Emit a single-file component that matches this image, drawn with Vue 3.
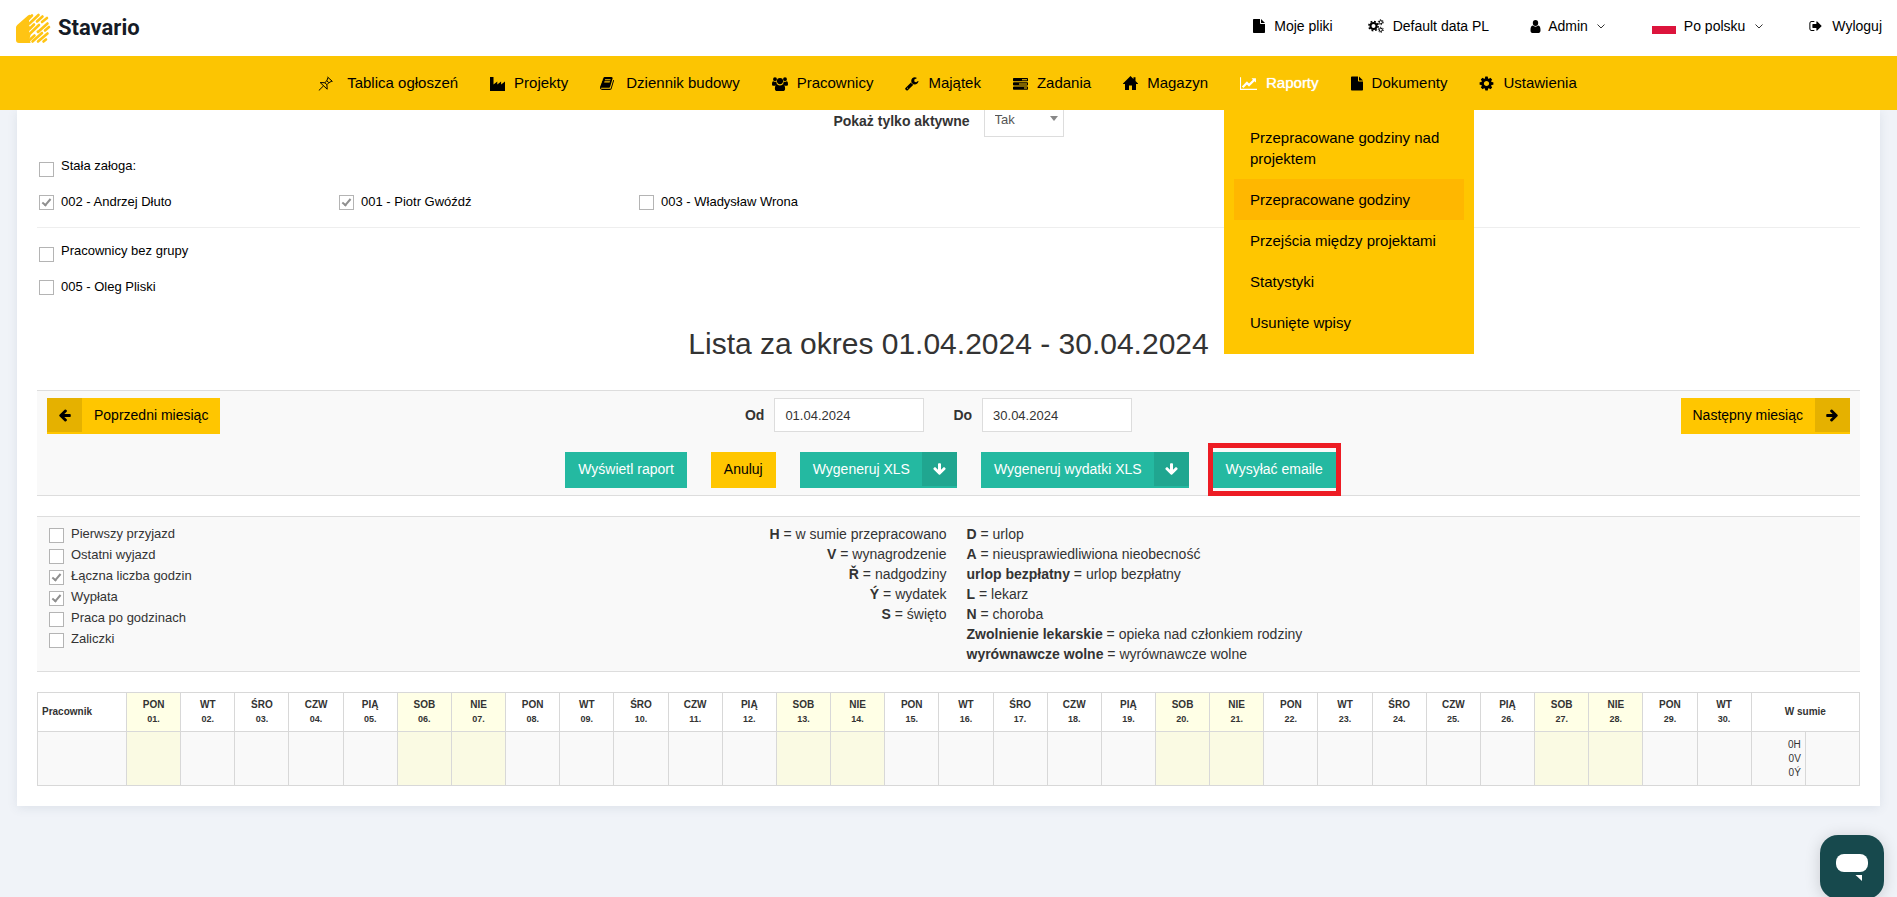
<script setup>
import { ref } from 'vue'

const icons = {
  pin: { w: 15, box: '0 0 15 15', stroke: true, d: 'M9.500 1l5 4.500M10 1.500L8.800 4.800 6.800 6.700 2.200 6.600l7 6.600-.3-4.500 2-2L14 5M5.500 9.900L.8 14.500M6.800 6.700L8.900 8.700M8.800 4.800L10.900 6.700' },
  industry: { w: 15, box: '0 0 15 15', d: 'M0 1h3.500v7.500l3.800-3v3l3.800-3v3L15 5.500V15H0z' },
  book: { w: 14, box: '0 0 1664 1792', d: 'M1639 478q40 57 18 129l-275 906q-19 64-76.500 107.500T1183 1664H260q-77 0-148.500-53.500T12 1479q-24-67-2-127 0-4 3-27t4-37q1-8-3-21.500t-3-19.500q2-11 8-21t16.500-23.500T52 1179q23-38 45-91.500t30-91.500q3-10 .5-30t-.5-28q3-11 17-28t17-23q21-36 42-92t25-90q1-9-2.500-32t.5-28q4-13 22-30.500t22-22.500q19-26 42.500-84.500T340 411q1-8-3-25.500t-2-26.500q2-8 9-18t18-23 17-21q8-12 16.500-30.500T410 231t16-36 19.500-32 26.500-23.500 36-11.500 47.500 5.500l-1 3q38-9 51-9h761q74 0 114 56t18 130l-274 906q-36 119-71.500 153.500T1025 1408H156q-27 0-38 15-11 16-1 43 24 70 144 70h923q29 0 56-15.500t35-41.500l300-987q7-22 5-57 38 15 59 43zM575 480q-4 13 2 22.500t20 9.500h608q13 0 25.500-9.500T1247 480l21-64q4-13-2-22.500t-20-9.500H638q-13 0-25.500 9.500T596 416zm-83 256q-4 13 2 22.500t20 9.500h608q13 0 25.500-9.500T1164 736l21-64q4-13-2-22.500t-20-9.500H555q-13 0-25.500 9.500T513 672z' },
  users: { w: 16, box: '0 0 16 15', d: 'M3 1.200a1.900 1.900 0 1 1 0 3.900 1.900 1.900 0 0 1 0-3.900zm10 0a1.900 1.900 0 1 1 0 3.900 1.900 1.900 0 0 1 0-3.900zM8 2a3 3 0 1 1 0 6.200A3 3 0 0 1 8 2zM0 8.200C0 6.500.4 5.200 1.400 5.200c1 .8 2 .8 3 .4 0 1.400.3 2.400 1 3.200-1 0-1.900.4-2.500 1H1.500C.6 9.800 0 9.300 0 8.200zm16 0c0-1.700-.4-3-1.400-3-1 .8-2 .8-3 .4 0 1.400-.3 2.400-1 3.200 1 0 1.900.4 2.500 1h1.400c.9 0 1.500-.5 1.500-1.600zM5.300 8.500c1.700 1.200 3.700 1.200 5.400 0 1.800 0 2.400 1.900 2.400 4.200 0 1.500-.9 2.300-2.200 2.300H5.100c-1.300 0-2.200-.8-2.200-2.300 0-2.300.6-4.200 2.400-4.200z' },
  wrench: { w: 14, box: '64 0 1728 1792', d: 'M448 1472q0-26-19-45t-45-19-45 19-19 45 19 45 45 19 45-19 19-45zm644-420l-682 682q-37 37-90 37-52 0-91-37l-106-108q-38-36-38-90 0-53 38-91l681-681q39 98 114.500 173.500t173.500 114.500zm634-435q0 39-23 106-47 134-164.500 217.500t-258.500 83.500q-185 0-316.500-131.500t-131.500-316.500 131.500-316.500 316.500-131.500q58 0 121.500 16.500t107.500 46.500q16 11 16 28t-16 28l-293 169v224l193 107q5-3 79-48.500t135.500-81 70.500-35.500q15 0 23.500 10t8.500 25z' },
  tasks: { w: 15, box: '0 0 15 15', d: 'M.8 2h13.400c.5 0 .8.300.8.800v1.700c0 .5-.3.800-.8.800H.8c-.5 0-.8-.3-.8-.8V2.800C0 2.300.3 2 .8 2zM9 3.200v1h5v-1zM.8 6.200h13.400c.5 0 .8.300.8.800v1.700c0 .5-.3.800-.8.800H.8c-.5 0-.8-.3-.8-.8V7c0-.5.3-.8.8-.8zM6 7.400v1h8v-1zM.8 10.400h13.400c.5 0 .8.300.8.800v1.700c0 .5-.3.800-.8.800H.8c-.5 0-.8-.3-.8-.8v-1.700c0-.5.3-.8.8-.8zM11 11.600v1h3v-1z' },
  home: { w: 15, box: '0 0 15 15', d: 'M7.500 0L10.500 3V1.200h2V5L15 7.500V8h-2v6H9V9.500H6V14H2V8H0v-.5z' },
  chart: { w: 17, box: '0 0 2048 1792', d: 'M2048 1536v128h-2048v-1536h128v1408h1920zm-128-1248v435q0 21-19.500 29.500t-35.500-7.500l-121-121-633 633q-10 10-23 10t-23-10l-233-233-416 416-192-192 585-585q10-10 23-10t23 10l233 233 464-464-121-121q-16-16-7.500-35.500t29.500-19.500h435q14 0 23 9t9 23z' },
  file: { w: 12, box: '0 0 12 14', d: 'M.8 0H7v4.200c0 .5.300.8.800.8H12v8.200c0 .5-.3.800-.8.800H.8c-.5 0-.8-.3-.8-.8V.8C0 .3.300 0 .8 0zM8 0l4 4H8z' },
  cog: { w: 15, box: '60 60 1672 1672', d: 'M1186 896q0-120-85-205t-205-85-205 85-85 205 85 205 205 85 205-85 85-205zm478-109v222q0 12-8 23t-20 13l-185 28q-19 54-39 91 35 50 107 138 10 12 10 25t-9 23q-27 37-99 108t-94 71q-12 0-26-9l-138-108q-44 23-91 38-16 136-29 186-7 28-36 28h-222q-14 0-24.500-8.500t-11.500-21.500l-28-184q-49-16-90-37l-141 107q-10 9-25 9-14 0-25-11-126-114-165-168-7-10-7-23 0-12 8-23 15-21 51-66.500t54-70.500q-27-50-41-99l-183-27q-13-2-21-12.500t-8-23.500v-222q0-12 8-23t19-13l186-28q14-46 39-92-40-57-107-138-10-12-10-24 0-10 9-23 26-36 98.500-107.500t94.500-71.500q13 0 26 10l138 107q44-23 91-38 16-136 29-186 7-28 36-28h222q14 0 24.500 8.500t11.500 21.500l28 184q49 16 90 37l142-107q9-9 24-9 13 0 25 10 129 119 165 170 7 8 7 22 0 12-8 23-15 21-51 66.500t-54 70.500q26 50 41 98l183 28q13 2 21 12.500t8 23.500z' },
}

const nav = [
  { icon: 'pin', label: 'Tablica ogłoszeń', gap: 'gap-l' },
  { icon: 'industry', label: 'Projekty' },
  { icon: 'book', label: 'Dziennik budowy', gap: 'gap-m' },
  { icon: 'users', label: 'Pracownicy' },
  { icon: 'wrench', label: 'Majątek' },
  { icon: 'tasks', label: 'Zadania' },
  { icon: 'home', label: 'Magazyn' },
  {
    icon: 'chart', label: 'Raporty', active: true,
    menu: ['Przepracowane godziny nad projektem', 'Przepracowane godziny', 'Przejścia między projektami', 'Statystyki', 'Usunięte wpisy'],
  },
  { icon: 'file', label: 'Dokumenty' },
  { icon: 'cog', label: 'Ustawienia' },
]

const arrow = 'M1664 896v128q0 53-32.500 90.500t-84.500 37.500h-704l293 294q38 36 38 90t-38 90l-75 76q-37 37-90 37-52 0-91-37l-651-652q-37-37-37-90 0-52 37-91l651-650q38-38 91-38 52 0 90 38l75 74q38 38 38 91t-38 91l-293 293h704q52 0 84.500 37.500t32.500 90.500z'

const onlyActive = ref('Tak')
const from = ref('01.04.2024')
const to = ref('30.04.2024')

const groups = ref([
  {
    label: 'Stała załoga:', on: false,
    people: [
      { label: '002 - Andrzej Dłuto', on: true },
      { label: '001 - Piotr Gwóźdź', on: true },
      { label: '003 - Władysław Wrona', on: false },
    ],
  },
  { label: 'Pracownicy bez grupy', on: false, people: [{ label: '005 - Oleg Pliski', on: false }] },
])

const options = ref([
  { label: 'Pierwszy przyjazd', on: false },
  { label: 'Ostatni wyjazd', on: false },
  { label: 'Łączna liczba godzin', on: true },
  { label: 'Wypłata', on: true },
  { label: 'Praca po godzinach', on: false },
  { label: 'Zaliczki', on: false },
])

const legendTotals = [['H', 'w sumie przepracowano'], ['V', 'wynagrodzenie'], ['Ř', 'nadgodziny'], ['Ý', 'wydatek'], ['S', 'święto']]
const legendAbsence = [
  ['D', 'urlop'],
  ['A', 'nieusprawiedliwiona nieobecność'],
  ['urlop bezpłatny', 'urlop bezpłatny'],
  ['L', 'lekarz'],
  ['N', 'choroba'],
  ['Zwolnienie lekarskie', 'opieka nad członkiem rodziny'],
  ['wyrównawcze wolne', 'wyrównawcze wolne'],
]

const names = ['PON', 'WT', 'ŚRO', 'CZW', 'PIĄ', 'SOB', 'NIE']
const marked = [1, 6, 7, 13, 14, 20, 21, 27, 28]
const days = Array.from({ length: 30 }, (_, i) => ({
  name: names[i % 7],
  date: String(i + 1).padStart(2, '0') + '.',
  marked: marked.includes(i + 1),
}))
</script>

<template>
  <div class="page">
    <header class="top">
      <a href="#" class="logo" aria-label="Stavario">
        <svg width="36" height="32" viewBox="0 0 36 32" aria-hidden="true">
          <path d="M1 15.500Q1 14 2.200 13L13 3.500Q15 2 16 3.500L14 8.500V13l1.500 3-1.500 4 1.500 3-1 4 1 3.500V31H4Q1 31 1 28z" fill="#ffc414" />
          <g stroke="#ffc414" stroke-width="2.600" stroke-linecap="round" fill="none">
            <path d="M12 8.500L17 3.500M14.500 11.500L23.500 3M14.500 17L19 12.500M22 9.500L27.500 4.500M13.500 23L24 13M27 10L32 6M14 28.500L19.500 23.500M23 20L32.500 11.500M17.500 29.500L27 21M30 18.500L34 15M23 29.500L32.500 21.500M28.500 29.500L31 27.500" />
          </g>
          <circle cx="22.500" cy="19.500" r="1" fill="#ffc414" />
        </svg>
        <span>Stavario</span>
      </a>
      <nav class="tools" aria-label="Konto">
        <a href="#" class="t-files">
          <svg width="12" height="14" viewBox="0 0 12 14"><path :d="icons.file.d" /></svg>Moje pliki
        </a>
        <a href="#" class="t-data">
          <svg width="16" height="14" viewBox="0 0 16 14">
            <circle cx="5.500" cy="7" r="3" fill="none" stroke="#000" stroke-width="2" />
            <circle cx="5.500" cy="7" r="4.600" fill="none" stroke="#000" stroke-width="1.600" stroke-dasharray="1.800 1.810" />
            <circle cx="12.800" cy="3.200" r="1.600" fill="none" stroke="#000" />
            <circle cx="12.800" cy="3.200" r="2.500" fill="none" stroke="#000" stroke-dasharray="1.300 1.320" />
            <circle cx="12.800" cy="10.800" r="1.600" fill="none" stroke="#000" />
            <circle cx="12.800" cy="10.800" r="2.500" fill="none" stroke="#000" stroke-dasharray="1.300 1.320" />
          </svg>Default data PL
        </a>
        <a href="#" class="t-user">
          <svg width="11" height="13" viewBox="0 0 11 13"><path d="M5.500 0a2.700 3 0 1 1 0 6 2.700 3 0 0 1 0-6zM2.800 5.600c1.700 1.500 3.700 1.500 5.400 0C10 5.800 10.500 8 10.500 10.300c0 1.700-.8 2.700-1.800 2.700H2.300c-1 0-1.800-1-1.800-2.700C.5 8 1 5.800 2.800 5.600z" /></svg>Admin
          <svg class="chev" width="8" height="5" viewBox="0 0 8 5"><path d="M.5.5L4 4 7.500.5" /></svg>
        </a>
        <a href="#" class="t-lang">
          <span class="flag"></span>Po polsku
          <svg class="chev" width="8" height="5" viewBox="0 0 8 5"><path d="M.5.5L4 4 7.500.5" /></svg>
        </a>
        <a href="#" class="t-out">
          <svg width="13" height="12" viewBox="64 128 1568 1536"><path d="M704 1440q0 4 1 20t.5 26.500-3 23.500-10 19.500-20.500 6.500h-320q-119 0-203.500-84.500t-84.500-203.500v-704q0-119 84.500-203.500t203.500-84.500h320q13 0 22.500 9.500t9.500 22.500q0 4 1 20t.5 26.500-3 23.500-10 19.500-20.500 6.500h-320q-66 0-113 47t-47 113v704q0 66 47 113t113 47h312l11.500 1 11.500 3 8 5.500 7 9 2 13.500zm928-544q0 26-19 45l-544 544q-19 19-45 19t-45-19-19-45v-288h-448q-26 0-45-19t-19-45v-384q0-26 19-45t45-19h448v-288q0-26 19-45t45-19 45 19l544 544q19 19 19 45z" /></svg>Wyloguj
        </a>
      </nav>
    </header>

    <nav class="bar" aria-label="Menu">
      <div v-for="n in nav" :key="n.label" class="bar-item" :class="{ active: n.active }">
        <a href="#" class="bar-link">
          <svg :class="[n.gap, { line: icons[n.icon].stroke }]" :width="icons[n.icon].w" height="15" :viewBox="icons[n.icon].box" fill-rule="evenodd"><path :d="icons[n.icon].d" /></svg>
          <span>{{ n.label }}</span>
        </a>
        <div v-if="n.menu" class="menu">
          <a v-for="(m, i) in n.menu" :key="m" href="#" :class="{ current: i === 1 }">{{ m }}</a>
        </div>
      </div>
    </nav>

    <main class="panel">
      <div class="active-row">
        <label for="only-active">Pokaż tylko aktywne</label>
        <div class="select">
          <select id="only-active" v-model="onlyActive"><option>Tak</option><option>Nie</option></select>
        </div>
      </div>

      <section v-for="g in groups" :key="g.label" class="group">
        <label class="check head"><input v-model="g.on" type="checkbox"><span>{{ g.label }}</span></label>
        <div class="people">
          <label v-for="p in g.people" :key="p.label" class="check"><input v-model="p.on" type="checkbox"><span>{{ p.label }}</span></label>
        </div>
      </section>

      <h1>Lista za okres 01.04.2024 - 30.04.2024</h1>

      <section class="box filter">
        <div class="months">
          <button type="button" class="btn yellow">
            <span class="cap"><svg width="13" height="13" viewBox="64 128 1600 1664"><path :d="arrow" /></svg></span>
            <span class="txt">Poprzedni miesiąc</span>
          </button>
          <div class="dates">
            <label for="from">Od</label><input id="from" v-model="from" type="text">
            <label for="to">Do</label><input id="to" v-model="to" type="text">
          </div>
          <button type="button" class="btn yellow">
            <span class="txt">Następny miesiąc</span>
            <span class="cap"><svg class="right" width="13" height="13" viewBox="64 128 1600 1664"><path :d="arrow" /></svg></span>
          </button>
        </div>
        <div class="actions">
          <button type="button" class="btn green"><span class="txt">Wyświetl raport</span></button>
          <button type="button" class="btn yellow"><span class="txt">Anuluj</span></button>
          <button type="button" class="btn green"><span class="txt">Wygeneruj XLS</span><span class="cap"><svg class="down" width="13" height="13" viewBox="64 128 1600 1664"><path :d="arrow" /></svg></span></button>
          <button type="button" class="btn green"><span class="txt">Wygeneruj wydatki XLS</span><span class="cap"><svg class="down" width="13" height="13" viewBox="64 128 1600 1664"><path :d="arrow" /></svg></span></button>
          <button type="button" class="btn green marked"><span class="txt">Wysyłać emaile</span></button>
        </div>
      </section>

      <section class="box legend">
        <div class="options">
          <label v-for="o in options" :key="o.label" class="check"><input v-model="o.on" type="checkbox"><span>{{ o.label }}</span></label>
        </div>
        <div class="totals">
          <div v-for="l in legendTotals" :key="l[0]"><b>{{ l[0] }}</b> = {{ l[1] }}</div>
        </div>
        <div>
          <div v-for="l in legendAbsence" :key="l[0]"><b>{{ l[0] }}</b> = {{ l[1] }}</div>
        </div>
      </section>

      <table>
        <colgroup><col class="first"><col v-for="d in 32" :key="d"></colgroup>
        <thead>
          <tr>
            <th class="name">Pracownik</th>
            <th v-for="d in days" :key="d.date" :class="{ hot: d.marked }">{{ d.name }}<small>{{ d.date }}</small></th>
            <th colspan="2">W sumie</th>
          </tr>
        </thead>
        <tbody>
          <tr>
            <td></td>
            <td v-for="d in days" :key="d.date" :class="{ hot: d.marked }"></td>
            <td class="sum"><div>0H</div><div>0V</div><div>0Ý</div></td>
            <td></td>
          </tr>
        </tbody>
      </table>
    </main>

    <button type="button" class="chat" aria-label="Czat">
      <svg width="32" height="27" viewBox="0 0 32 27"><rect width="32" height="18" rx="8" /><path d="M19.500 21H26v6z" /></svg>
    </button>
  </div>
</template>

<style>
body {
  margin: 0;
  background: #f0f3f8;
}
</style>

<style scoped>
.page {
  min-height: 100vh;
  font-family: "Liberation Sans", Arial, sans-serif;
  font-size: 14px;
  line-height: 20px;
  color: #333;
}
.page *, .page *::before, .page *::after { box-sizing: border-box; }
a { color: #000; text-decoration: none; }
button, input, select { font-family: inherit; margin: 0; }

.top {
  display: flex;
  justify-content: space-between;
  align-items: center;
  height: 56px;
  padding: 0 15px;
  background: #fff;
}
.logo {
  display: flex;
  align-items: center;
  gap: 7px;
  font: 700 22px/30px Roboto, sans-serif;
  color: #151b26;
}
.tools { display: flex; align-items: center; padding-bottom: 4px; }
.tools a { display: flex; align-items: center; }
.t-files { gap: 9px; margin-right: 35px; }
.t-data { gap: 9px; margin-right: 41px; }
.t-user { gap: 7px; margin-right: 47px; }
.t-lang { gap: 8px; margin-right: 46px; }
.t-out { gap: 10px; }
.chev { fill: none; stroke: #333; margin-left: 2px; }
.flag { width: 24px; height: 16px; background: linear-gradient(#fff 50%, #dc143c 50%); }

.bar {
  position: relative;
  z-index: 2;
  display: flex;
  justify-content: center;
  gap: 32px;
  height: 54px;
  padding-right: 2px;
  background: #fcc502;
  font-size: 15px;
}
.bar-item { position: relative; }
.bar-link { display: flex; align-items: center; gap: 9px; height: 54px; }
.line { fill: none; stroke: #000; stroke-linejoin: round; }
.gap-l { margin-right: 5px; }
.gap-m { margin-right: 3px; }
.active .bar-link { color: #fff; fill: #fff; text-shadow: 0 0 1px #fff; }
.menu {
  position: absolute;
  top: 54px;
  left: -16px;
  width: 250px;
  padding: 7px 10px 11px;
  background: #ffc600;
}
.menu a { display: block; padding: 10px 16px; line-height: 21px; }
.menu .current { background: #ffb700; }

.panel {
  margin: 0 17px;
  padding: 0 20px 20px;
  background: #fff;
  box-shadow: 0 2px 10px rgba(60, 80, 110, 0.1);
}
.active-row {
  display: flex;
  justify-content: center;
  align-items: center;
  gap: 14px;
  height: 27px;
  font-weight: 700;
}
.active-row label { padding-bottom: 6px; }
.select { position: relative; align-self: flex-end; }
.select::after {
  content: "";
  position: absolute;
  right: 6px;
  top: 13px;
  border: 4px solid transparent;
  border-top: 5px solid #888;
  border-bottom: 0;
}
select {
  appearance: none;
  display: block;
  width: 80px;
  height: 34px;
  padding: 0 10px 2px;
  border: 1px solid #ddd;
  border-radius: 0;
  background: #fff;
  color: #555;
  font-size: 13px;
}

.check {
  display: flex;
  align-items: flex-start;
  gap: 7px;
  font-size: 13px;
  line-height: 15px;
  color: #000;
}
.check span { margin-top: -1px; }
.check input {
  appearance: none;
  flex: none;
  width: 15px;
  height: 15px;
  border: 1px solid #b4b4b4;
  background: #fff;
}
.check input:checked::after {
  content: "";
  display: block;
  width: 5px;
  height: 9px;
  margin: 1px 0 0 4px;
  border: solid #8f8f8f;
  border-width: 0 2px 2px 0;
  transform: rotate(40deg);
}
.group { padding: 19px 2px 17px; }
.active-row + .group { padding-top: 25px; border-bottom: 1px solid #eee; }
.head span { margin-top: -4px; }
.people { display: flex; margin-top: 18px; }
.people .check { width: 300px; }

h1 {
  margin: 10px 0 25px;
  text-align: center;
  font-size: 30px;
  line-height: 43px;
  font-weight: 400;
}

.box { border: solid #ddd; border-width: 1px 0; background: #f9f9f9; }
.filter { padding: 7px 10px; }
.months { display: grid; grid-template-columns: 1fr auto 1fr; align-items: start; }
.months > :last-child { justify-self: end; }
.months > :first-child { justify-self: start; }
.dates { display: flex; align-items: center; padding-right: 20px; font-weight: 700; }
.dates label { margin-right: 10px; }
.dates input {
  width: 150px;
  height: 34px;
  padding: 0 10px;
  border: 1px solid #ddd;
  font-size: 13px;
  color: #333;
}
.dates input + label { margin-left: 29px; }
.btn {
  display: flex;
  align-items: stretch;
  height: 36px;
  padding: 0 0 2px;
  border: 0;
  font-size: 14px;
  line-height: 34px;
}
.yellow { background: #ffc600; color: #000; }
.green { background: #24b9a1; color: #fff; }
.btn .txt { padding: 0 12px; }
.cap { display: flex; align-items: center; justify-content: center; width: 35px; background: rgba(0, 0, 0, 0.1); fill: currentColor; }
.right { transform: rotate(180deg); }
.down { transform: rotate(-90deg); }
.actions { display: flex; justify-content: center; gap: 24px; margin-top: 18px; padding-left: 4px; }
.actions .txt { padding: 0 13px; }
.actions .txt:not(:last-child) { padding-right: 12px; }
.marked { position: relative; }
.marked::after {
  content: "";
  position: absolute;
  inset: -9px -5px -8px;
  border: 5px solid #ed1c24;
}

.legend {
  display: grid;
  grid-template-columns: 1fr 1fr 2fr;
  margin-top: 20px;
  padding: 7px 12px;
}
.legend > :last-child { padding-left: 18px; }
.totals { text-align: right; padding-right: 2px; }
.options { padding-top: 4px; }
.options .check { margin-bottom: 6px; color: #333; }
.options .check span { margin-top: -2px; }

table {
  width: 100%;
  margin-top: 20px;
  border-collapse: collapse;
  table-layout: fixed;
  font-size: 10px;
}
.first { width: 89px; }
th, td { border: 1px solid #d8d8d8; padding: 0; }
th { height: 39px; line-height: 14px; font-weight: 700; }
th small { display: block; font-size: 9px; }
.name { text-align: left; padding-left: 4px; }
td { height: 54px; background: #f9f9f9; }
th.hot { background: #ffffe6; }
td.hot { background: #fafae3; }
.sum { text-align: right; padding-right: 4px; line-height: 14px; }

.chat {
  position: fixed;
  right: 13px;
  bottom: -2px;
  width: 64px;
  height: 64px;
  padding: 3px 0 0;
  border: 0;
  border-radius: 18px;
  background: #17494d;
  box-shadow: 0 2px 16px rgba(0, 0, 0, 0.16);
}
.chat svg { fill: #fff; }
</style>
